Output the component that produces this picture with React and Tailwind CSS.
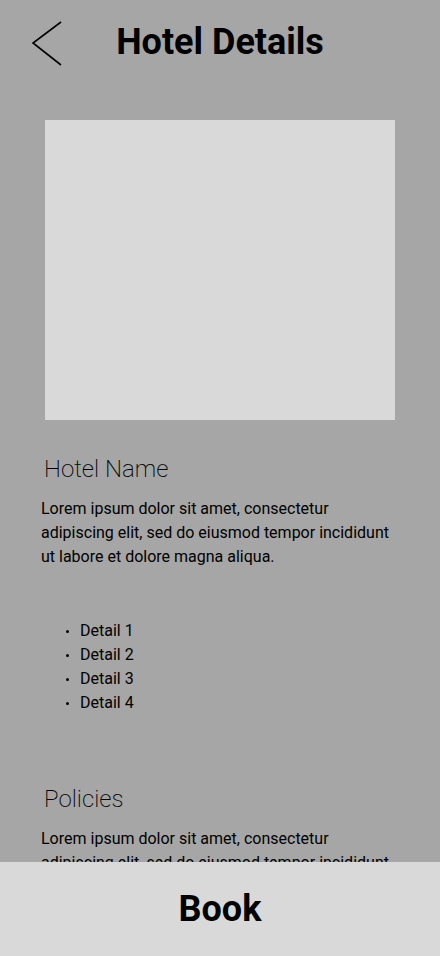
const LOREM =
  'Lorem ipsum dolor sit amet, consectetur adipiscing elit, sed do eiusmod tempor incididunt ut labore et dolore magna aliqua.'

const details = ['Detail 1', 'Detail 2', 'Detail 3', 'Detail 4']

const BackArrow = () => (
  <svg width="30" height="48" viewBox="0 0 30 48" fill="none" stroke="black" strokeWidth="1.6">
    <path d="M29 4 L1 25 L29 47" />
  </svg>
)

const SectionTitle = ({ children }) => (
  <h2 className="pl-[44px] text-[24px] leading-[32px] font-extralight text-black">{children}</h2>
)

const Paragraph = ({ children }) => (
  <p className="mt-3 pl-[41px] w-[400px] text-[16px] leading-[24px] text-black">{children}</p>
)

export default function App() {
  return (
    <div className="relative h-[956px] w-[440px] overflow-hidden bg-[#a6a6a6] font-['Roboto',sans-serif]">
      <header className="grid grid-cols-[1fr_auto_1fr] items-center h-[84px]">
        <button className="pl-[32px] flex items-center">
          <BackArrow />
        </button>
        <h1 className="text-[36px] leading-none font-bold text-black">Hotel Details</h1>
        <div />
      </header>

      <div className="mt-[36px] ml-[45px] w-[350px] h-[300px] bg-[#d9d9d9]" />

      <section className="mt-[33px]">
        <SectionTitle>Hotel Name</SectionTitle>
        <Paragraph>{LOREM}</Paragraph>
      </section>

      <ul className="mt-[50px] pl-[66px] text-[16px] leading-[24px] text-black">
        {details.map(d => (
          <li key={d} className="flex items-center">
            <span className="w-[3px] h-[3px] rounded-full bg-black" />
            <span className="ml-[11px]">{d}</span>
          </li>
        ))}
      </ul>

      <section className="mt-[68px]">
        <SectionTitle>Policies</SectionTitle>
        <Paragraph>{LOREM}</Paragraph>
      </section>

      <div className="absolute bottom-0 left-0 w-full h-[94px] bg-[#d9d9d9] flex items-center justify-center">
        <span className="text-[36px] font-bold text-black">Book</span>
      </div>
    </div>
  )
}
